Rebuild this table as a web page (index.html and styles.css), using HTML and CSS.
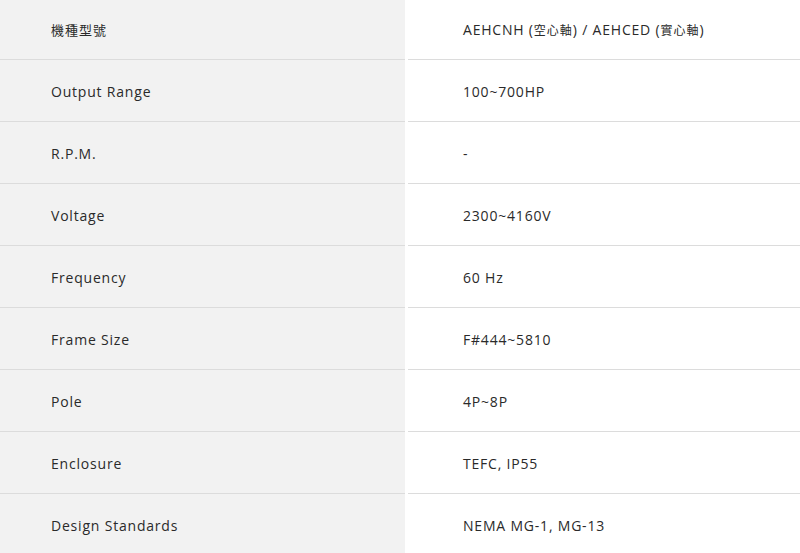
FILE: index.html
```html
<!DOCTYPE html>
<html lang="zh-Hant">
<head>
<meta charset="utf-8">
<link rel="stylesheet" href="styles.css">
</head>
<body>
<div class="spec">
  <div class="row first"><div class="k cjk">機種型號</div><div class="v">AEHCNH (<span class="cjk">空心軸</span>) / AEHCED (<span class="cjk">實心軸</span>)</div></div>
  <div class="row"><div class="k">Output Range</div><div class="v">100~700HP</div></div>
  <div class="row"><div class="k">R.P.M.</div><div class="v">-</div></div>
  <div class="row"><div class="k">Voltage</div><div class="v">2300~4160V</div></div>
  <div class="row"><div class="k">Frequency</div><div class="v">60 Hz</div></div>
  <div class="row"><div class="k">Frame Size</div><div class="v">F#444~5810</div></div>
  <div class="row"><div class="k">Pole</div><div class="v">4P~8P</div></div>
  <div class="row"><div class="k">Enclosure</div><div class="v">TEFC, IP55</div></div>
  <div class="row"><div class="k">Design Standards</div><div class="v">NEMA MG-1, MG-13</div></div>
</div>
</body>
</html>
```
FILE: styles.css
```css
html, body { margin: 0; padding: 0; background: #fff; }
body {
  font-family: "Open Sans", "Noto Sans CJK TC", sans-serif;
  font-size: 14px;
  color: #2a2a2a;
  letter-spacing: 0.8px;
  overflow: hidden;
}
.spec { display: flex; flex-direction: column; }
.row {
  display: grid;
  grid-template-columns: 405px 1fr;
  column-gap: 3px;
  height: 62px;
}
.row.first { height: 60px; }
.k, .v {
  display: flex;
  align-items: center;
  border-bottom: 1px solid #dcdcdc;
  padding-top: 2px;
  white-space: pre;
}
.row.first .k, .row.first .v { padding-top: 0; }
.k { background: #f2f2f2; padding-left: 51px; }
.v { background: #fff; padding-left: 55px; }
.cjk { font-family: "Noto Sans CJK TC", sans-serif; font-size: 13px; letter-spacing: 1px; }
.v .cjk { font-size: 12px; }
```
